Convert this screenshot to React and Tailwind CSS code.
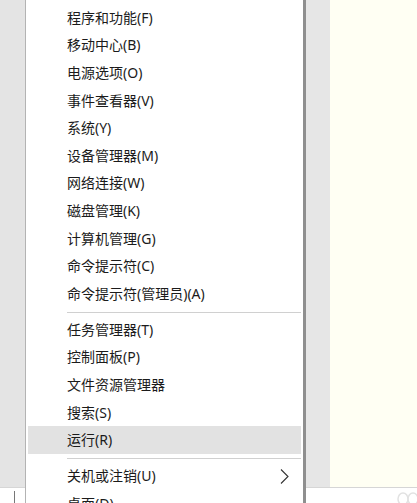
import React from "react";

const groups = [
  ["程序和功能(F)", "移动中心(B)", "电源选项(O)", "事件查看器(V)", "系统(Y)", "设备管理器(M)", "网络连接(W)", "磁盘管理(K)", "计算机管理(G)", "命令提示符(C)", "命令提示符(管理员)(A)"],
  ["任务管理器(T)", "控制面板(P)", "文件资源管理器", "搜索(S)", "运行(R)"],
  ["关机或注销(U)", "桌面(D)"],
];

const font = { fontFamily: '"Noto Sans", "Noto Sans CJK SC", sans-serif' };

function Item({ label, active, sub }) {
  return (
    <div className={`mx-[2px] h-[27.6px] flex items-center pl-[39px] pr-[10px] text-[14px] text-[#1b1b1b] ${active ? "bg-[#e2e2e2]" : ""}`}>
      <span className="flex-1 leading-none">{label}</span>
      {sub && (
        <svg width="9" height="15" viewBox="0 0 9 15" className="mr-[2px]">
          <path d="M1 0.5 L8 7.5 L1 14.5" fill="none" stroke="#333" strokeWidth="1.1" />
        </svg>
      )}
    </div>
  );
}

export default function App() {
  return (
    <div className="relative w-[417px] h-[503px] overflow-hidden bg-white" style={font}>
      {/* page behind the menu */}
      <div className="flex flex-col h-full">
        <div className="flex h-[487px]">
          <div className="w-[25px] bg-[#e4e4e4]" />
          <div className="w-[280px] bg-white" />
          <div className="w-[25px] bg-[#e6e6e6]" />
          <div className="flex-1 bg-[#fffff3]" />
        </div>
        <div className="flex-1 flex items-end border-t border-[#d6d6d6] bg-white">
          <div className="w-[25px] flex justify-center pl-[4px]">
            <span className="block w-px h-[12px] bg-[#777]" />
          </div>
          <div className="flex-1" />
          <svg width="22" height="12" viewBox="0 0 22 12">
            <ellipse cx="8" cy="8" rx="5" ry="6" fill="none" stroke="#e2e2e2" strokeWidth="1.5" />
            <ellipse cx="18" cy="8" rx="5" ry="6" fill="none" stroke="#e2e2e2" strokeWidth="1.5" />
          </svg>
        </div>
      </div>

      {/* context menu */}
      <div className="absolute left-[25px] top-0 w-[281px] h-full bg-white border-l border-[#b3b3b3] border-r-[3px] border-r-[#8f8f8f] pt-[4px]">
        {groups.map((g, gi) => (
          <div key={gi}>
            {gi > 0 && (
              <div className="pt-[4px] pb-[3.4px] pl-[41px] pr-[2px]">
                <div className="h-px bg-[#d0d0d0]" />
              </div>
            )}
            {g.map((label) => (
              <Item key={label} label={label} active={label === "运行(R)"} sub={label === "关机或注销(U)"} />
            ))}
          </div>
        ))}
      </div>
    </div>
  );
}
